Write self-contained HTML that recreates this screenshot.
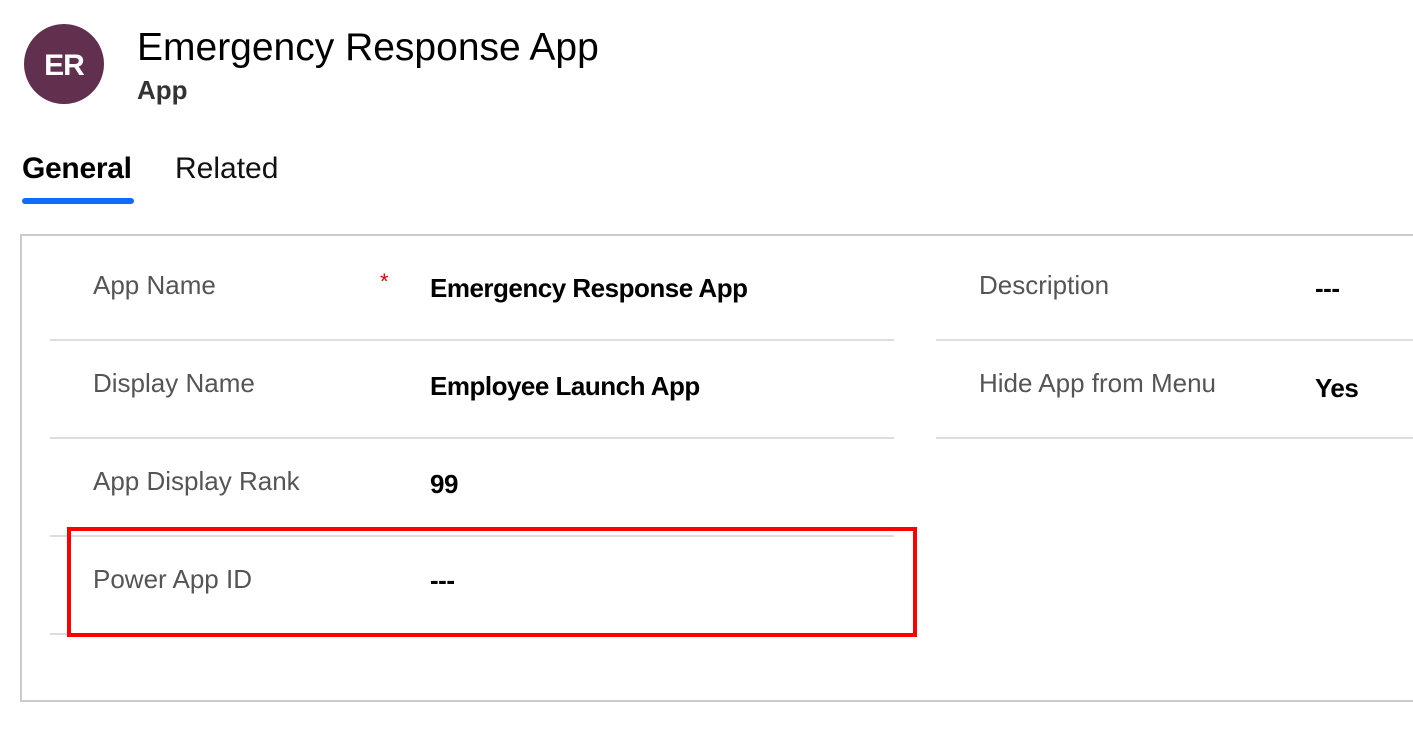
<!DOCTYPE html>
<html><head><meta charset="utf-8"><style>
body{margin:0;width:1413px;height:738px;background:#fff;font-family:"Liberation Sans",sans-serif;position:relative;overflow:hidden}
.a{position:absolute;white-space:nowrap}
.lbl{font-size:26px;color:#555}
.val{font-size:26px;color:#000;font-weight:bold;letter-spacing:-0.5px}
.ln{position:absolute;height:2px;background:#ddd}
</style></head><body>
<div class="a" style="left:24px;top:24px;width:80px;height:80px;border-radius:50%;background:#61304f;color:#fff;font-size:30px;font-weight:bold;line-height:84px;text-align:center;letter-spacing:-1px">ER</div>
<div class="a" style="left:137px;top:26px;font-size:39px;color:#000;letter-spacing:0px">Emergency Response App</div>
<div class="a" style="left:137px;top:75px;font-size:26px;color:#333;font-weight:bold">App</div>
<div class="a" style="left:22px;top:152px;font-size:30px;color:#000;font-weight:bold;letter-spacing:-0.3px">General</div>
<div class="a" style="left:175px;top:152px;font-size:30px;color:#111">Related</div>
<div class="a" style="left:22px;top:198px;width:112px;height:6px;border-radius:3px;background:#0f6cff"></div>
<div class="a" style="left:20px;top:234px;width:1400px;height:468px;border:2px solid #ccc;box-sizing:border-box"></div>
<div class="ln" style="left:50px;top:339px;width:844px"></div>
<div class="ln" style="left:50px;top:437px;width:844px"></div>
<div class="ln" style="left:50px;top:535px;width:844px"></div>
<div class="ln" style="left:50px;top:633px;width:844px"></div>
<div class="ln" style="left:936px;top:339px;width:477px"></div>
<div class="ln" style="left:936px;top:437px;width:477px"></div>
<div class="a lbl" style="left:93px;top:270px">App Name</div>
<div class="a" style="left:380px;top:269px;color:#d00;font-size:22px">*</div>
<div class="a val" style="left:430px;top:273px">Emergency Response App</div>
<div class="a lbl" style="left:93px;top:368px">Display Name</div>
<div class="a val" style="left:430px;top:371px">Employee Launch App</div>
<div class="a lbl" style="left:93px;top:466px">App Display Rank</div>
<div class="a val" style="left:430px;top:469px">99</div>
<div class="a lbl" style="left:93px;top:564px">Power App ID</div>
<div class="a val" style="left:430px;top:565px">---</div>
<div class="a lbl" style="left:979px;top:270px">Description</div>
<div class="a val" style="left:1315px;top:273px">---</div>
<div class="a lbl" style="left:979px;top:368px">Hide App from Menu</div>
<div class="a val" style="left:1315px;top:373px">Yes</div>
<div class="a" style="left:67px;top:527px;width:850px;height:110px;border:4px solid #f00;box-sizing:border-box"></div>
</body></html>
